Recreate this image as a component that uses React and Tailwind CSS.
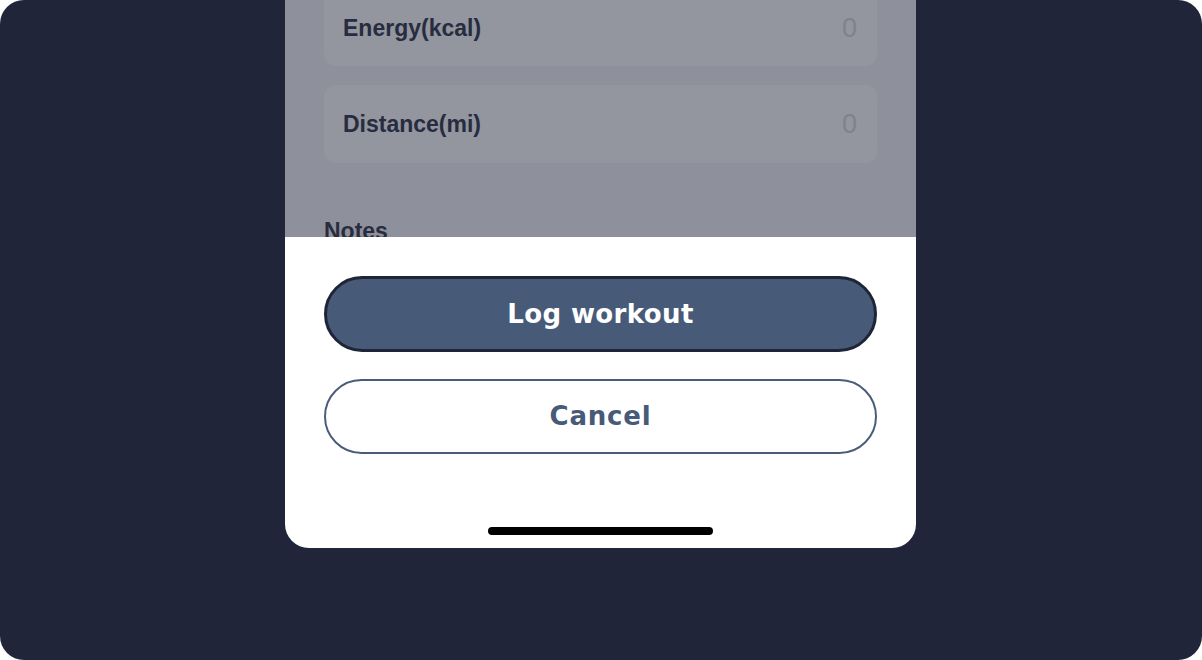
export default function App() {
  const label = { fontFamily: '"Liberation Sans", Arial, sans-serif' };
  const btn = { fontFamily: '"DejaVu Sans", "Liberation Sans", sans-serif' };
  return (
    <div className="w-[1202px] h-[660px] bg-white">
      <div className="w-full h-full bg-[#212539] rounded-[24px] overflow-hidden flex justify-center">
        <div className="w-[631px] h-[548px] ml-[-1px] rounded-b-[24px] overflow-hidden flex flex-col bg-white">
          <div className="h-[237px] shrink-0 bg-[#8e909b] overflow-hidden flex flex-col px-[39px]">
            <div className="mt-[-12px] h-[78px] shrink-0 rounded-[12px] bg-[#93959f] flex items-center justify-between pl-[19px] pr-[20px] pt-[2px]">
              <span style={label} className="text-[23px] font-bold text-[#272c3e]">Energy(kcal)</span>
              <span style={label} className="text-[27px] text-[#7f828d]">0</span>
            </div>
            <div className="mt-[19px] h-[78px] shrink-0 rounded-[12px] bg-[#93959f] flex items-center justify-between pl-[19px] pr-[20px]">
              <span style={label} className="text-[23px] font-bold text-[#272c3e]">Distance(mi)</span>
              <span style={label} className="text-[27px] text-[#7f828d]">0</span>
            </div>
            <div style={label} className="mt-[55px] text-[23px] leading-[27px] font-bold text-[#272c3e]">Notes</div>
          </div>
          <div className="flex-1 flex flex-col px-[39px] pt-[39px]">
            <button style={btn} className="h-[76px] rounded-full bg-[#475a78] border-[3px] border-[#1f2538] text-white text-[26px] font-bold tracking-[0.4px]">
              Log workout
            </button>
            <button style={btn} className="mt-[27px] h-[75px] rounded-full bg-white border-[2.5px] border-[#4a5c79] text-[#475a78] text-[26px] font-bold tracking-[0.8px]">
              Cancel
            </button>
            <div className="mt-auto mb-[13px] self-center w-[225px] h-[8px] rounded-full bg-black"></div>
          </div>
        </div>
      </div>
    </div>
  );
}
